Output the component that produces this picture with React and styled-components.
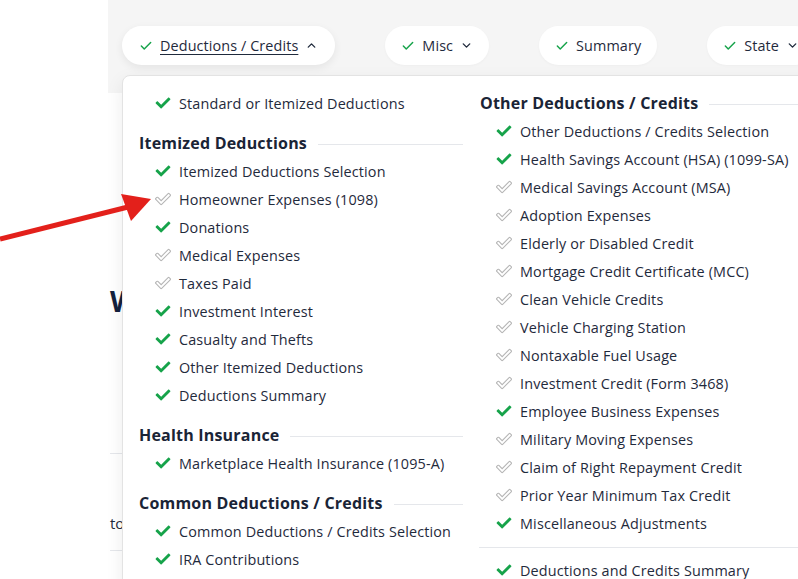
import React from "react";
import styled, { createGlobalStyle } from "styled-components";
import { Check, ChevronDown, ChevronUp } from "lucide-react";

const GlobalStyle = createGlobalStyle`
  html, body {
    margin: 0;
    padding: 0;
    background: #ffffff;
    font-family: "Open Sans", "Noto Sans", sans-serif;
    color: #1f2a3c;
    overflow: hidden;
  }
`;

const Screen = styled.div`
  position: relative;
  display: flex;
  width: 798px;
  height: 579px;
  overflow: hidden;
`;

const Gutter = styled.div`
  width: 108px;
  flex: none;
  background: #ffffff;
`;

const Main = styled.div`
  position: relative;
  flex: 1;
  display: flex;
  flex-direction: column;
  min-width: 0;
`;

const TopBar = styled.nav`
  height: 93px;
  box-sizing: border-box;
  padding: 26px 0 0 14px;
  background: #f5f5f5;
  display: flex;
  align-items: flex-start;
  gap: 50px;
  white-space: nowrap;
`;

const Pill = styled.button`
  height: 39px;
  display: flex;
  align-items: center;
  gap: 7px;
  padding: 0 ${(p) => (p.$open ? "17px" : "16px")};
  border: none;
  border-radius: 20px;
  background: #ffffff;
  box-shadow: ${(p) =>
    p.$open ? "0 3px 8px rgba(0, 0, 0, 0.07)" : "0 1px 3px rgba(0, 0, 0, 0.03)"};
  font-family: inherit;
  font-size: 14.4px;
  letter-spacing: 0.1px;
  color: #1f2a3c;
  flex: none;

  span {
    text-decoration: ${(p) => (p.$open ? "underline" : "none")};
    text-underline-offset: 3px;
  }
`;

const PillCheck = styled(Check)`
  color: #16a34a;
`;

const Body = styled.div`
  padding-left: 2px;
`;

const Title = styled.h1`
  margin: 190px 0 0;
  font-size: 28px;
  line-height: 36px;
  font-weight: 700;
  color: #14213d;
  white-space: nowrap;
`;

const List = styled.div`
  margin-top: 134px;
  border-top: 1px solid #e5e7eb;
`;

const Row = styled.div`
  padding: 58px 0 16px;
  line-height: 22px;
  font-size: 15px;
  border-bottom: 1px solid #e5e7eb;
  white-space: nowrap;
`;

const Dropdown = styled.div`
  position: absolute;
  left: 14px;
  top: 75px;
  width: 720px;
  box-sizing: border-box;
  padding: 13px 0 40px 16px;
  background: #ffffff;
  border: 1px solid #e3e3e3;
  border-radius: 8px;
  box-shadow: 0 6px 18px rgba(0, 0, 0, 0.08);
  display: grid;
  grid-template-columns: 324px 340px;
  column-gap: 17px;
  align-items: start;
`;

const Column = styled.div`
  display: flex;
  flex-direction: column;
`;

const Heading = styled.div`
  display: flex;
  align-items: center;
  margin-top: ${(p) => (p.$first ? "0" : "12px")};
  font-size: 16px;
  letter-spacing: 0.2px;
  line-height: 28px;
  font-weight: 700;
  color: #1a2436;
  white-space: nowrap;

  &::after {
    content: "";
    flex: 1;
    height: 1px;
    margin: 2px 0 0 11px;
    background: #e5e7eb;
  }
`;

const Item = styled.div`
  display: flex;
  align-items: center;
  gap: 8px;
  height: 28px;
  padding-left: 16px;
  font-size: 14.4px;
  letter-spacing: 0.15px;
  color: #1f2a3c;
  white-space: nowrap;
`;

const Divider = styled.div`
  height: 1px;
  margin: 10px 0 8px -1px;
  background: #e5e7eb;
`;

const Arrow = styled.svg`
  position: absolute;
  left: 0;
  top: 0;
  z-index: 5;
  pointer-events: none;
`;

const CHECK =
  "M173.9 439.4l-166.4-166.4c-10-10-10-26.2 0-36.2l36.2-36.2c10-10 26.2-10 36.2 0L192 312.7 432.1 72.6c10-10 26.2-10 36.2 0l36.2 36.2c10 10 10 26.2 0 36.2l-294.4 294.4c-10 10-26.2 10-36.2 0z";

const StatusIcon = ({ done }) => (
  <svg width="16" height="16" viewBox="-20 -20 552 552">
    {done ? (
      <path d={CHECK} fill="#16a34a" />
    ) : (
      <path d={CHECK} fill="#ffffff" stroke="#b5b5b5" strokeWidth="36" />
    )}
  </svg>
);

const left = [
  { items: [["Standard or Itemized Deductions", true]] },
  {
    title: "Itemized Deductions",
    items: [
      ["Itemized Deductions Selection", true],
      ["Homeowner Expenses (1098)", false],
      ["Donations", true],
      ["Medical Expenses", false],
      ["Taxes Paid", false],
      ["Investment Interest", true],
      ["Casualty and Thefts", true],
      ["Other Itemized Deductions", true],
      ["Deductions Summary", true],
    ],
  },
  {
    title: "Health Insurance",
    items: [["Marketplace Health Insurance (1095-A)", true]],
  },
  {
    title: "Common Deductions / Credits",
    items: [
      ["Common Deductions / Credits Selection", true],
      ["IRA Contributions", true],
    ],
  },
];

const right = [
  ["Other Deductions / Credits Selection", true],
  ["Health Savings Account (HSA) (1099-SA)", true],
  ["Medical Savings Account (MSA)", false],
  ["Adoption Expenses", false],
  ["Elderly or Disabled Credit", false],
  ["Mortgage Credit Certificate (MCC)", false],
  ["Clean Vehicle Credits", false],
  ["Vehicle Charging Station", false],
  ["Nontaxable Fuel Usage", false],
  ["Investment Credit (Form 3468)", false],
  ["Employee Business Expenses", true],
  ["Military Moving Expenses", false],
  ["Claim of Right Repayment Credit", false],
  ["Prior Year Minimum Tax Credit", false],
  ["Miscellaneous Adjustments", true],
];

const tabs = [
  { label: "Deductions / Credits", open: true },
  { label: "Misc", chevron: true },
  { label: "Summary" },
  { label: "State", chevron: true },
];

const Entry = ({ label, done }) => (
  <Item>
    <StatusIcon done={done} />
    {label}
  </Item>
);

export default function App() {
  return (
    <>
      <GlobalStyle />
      <Screen>
        <Gutter />
        <Main>
          <TopBar>
            {tabs.map((t) => (
              <Pill key={t.label} $open={t.open}>
                <PillCheck size={14} strokeWidth={2.5} />
                <span>{t.label}</span>
                {t.open && <ChevronUp size={13} strokeWidth={2.5} />}
                {t.chevron && <ChevronDown size={13} strokeWidth={2.5} />}
              </Pill>
            ))}
          </TopBar>
          <Body>
            <Title>What's next</Title>
            <List>
              <Row>total income</Row>
            </List>
          </Body>

          <Dropdown>
            <Column>
              {left.map((g, i) => (
                <React.Fragment key={i}>
                  {g.title && <Heading>{g.title}</Heading>}
                  {g.items.map(([label, done]) => (
                    <Entry key={label} label={label} done={done} />
                  ))}
                </React.Fragment>
              ))}
            </Column>
            <Column>
              <Heading $first>Other Deductions / Credits</Heading>
              {right.map(([label, done]) => (
                <Entry key={label} label={label} done={done} />
              ))}
              <Divider />
              <Entry label="Deductions and Credits Summary" done />
            </Column>
          </Dropdown>
        </Main>

        <Arrow width="160" height="260">
          <line x1="0" y1="239" x2="128" y2="207" stroke="#e3201b" strokeWidth="5" />
          <polygon points="151,199 121,194 131,221" fill="#e3201b" />
        </Arrow>
      </Screen>
    </>
  );
}
